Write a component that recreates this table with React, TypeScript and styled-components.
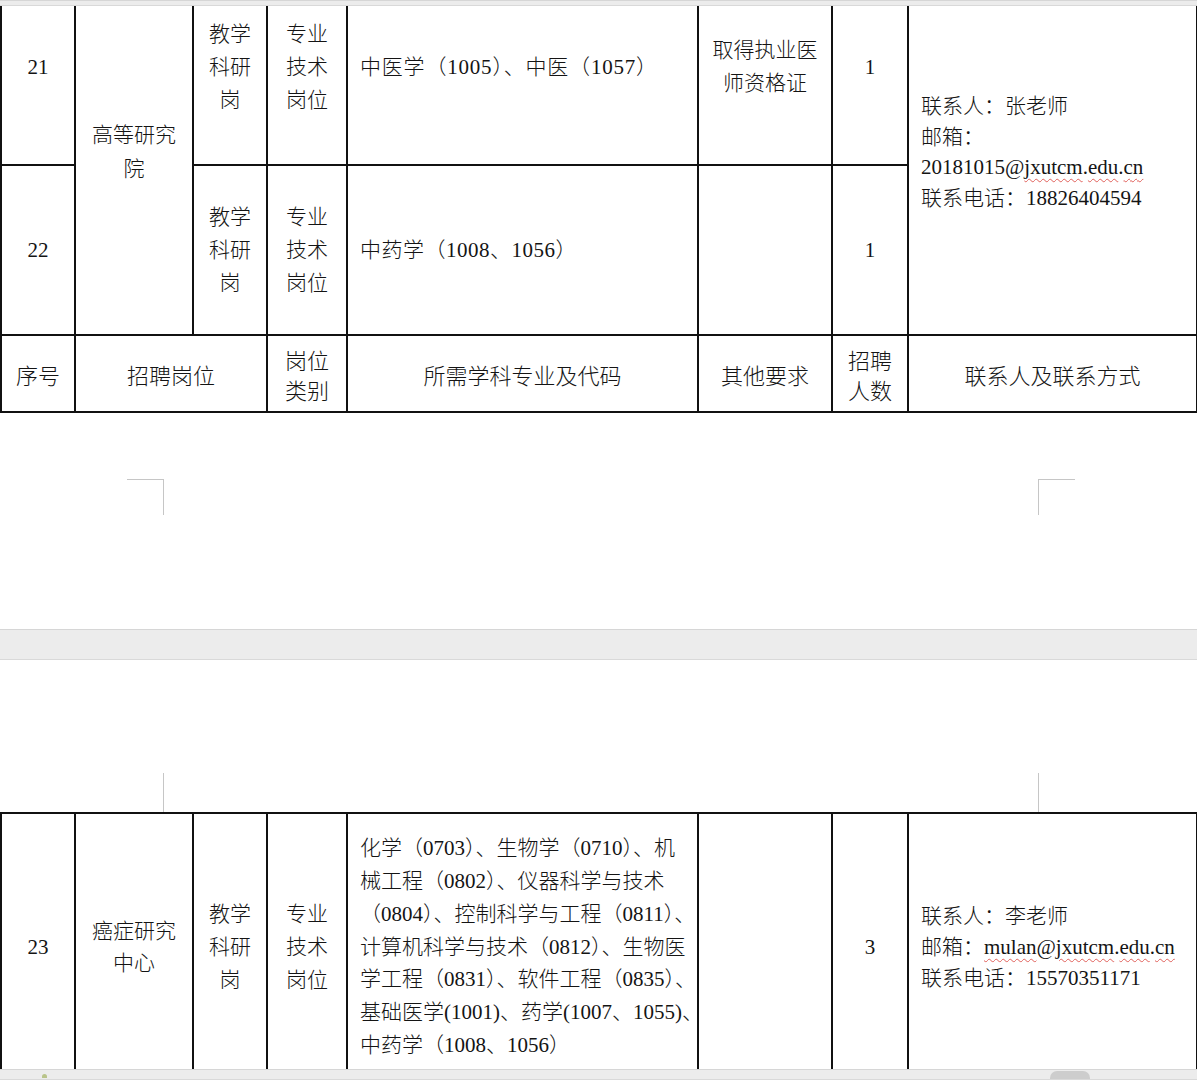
import React from 'react';
import styled, { createGlobalStyle } from 'styled-components';

const GlobalStyle = createGlobalStyle`
  html, body {
    margin: 0;
    padding: 0;
    background: #fff;
    overflow: hidden;
  }
  body {
    font-family: 'Liberation Serif', 'Noto Sans CJK SC', serif;
    color: #141414;
  }
`;

const Viewer = styled.div`
  width: 1197px;
  height: 1080px;
  display: flex;
  flex-direction: column;
  overflow: hidden;
`;

const Band = styled.div<{ h: number }>`
  flex-shrink: 0;
  height: ${({ h }) => h}px;
  box-sizing: border-box;
  background: #ececec;
  border-top: 1px solid #d6d6d6;
  border-bottom: 1px solid #d9d9d9;
  display: flex;
  align-items: flex-end;
`;

const Thumb = styled.div`
  margin-left: 1003px;
  width: 40px;
  height: 8px;
  border-radius: 7px 7px 0 0;
  background: #cdcdcd;
`;

const Dot = styled.div`
  margin-left: 42px;
  margin-bottom: 1px;
  width: 5px;
  height: 4px;
  border-radius: 3px 3px 0 0;
  background: #b9c48a;
`;

const Sheet = styled.div<{ h: number }>`
  flex-shrink: 0;
  height: ${({ h }) => h}px;
  overflow: hidden;
  background: #fff;
`;

const Scrolled = styled.div<{ offset: number }>`
  margin-top: ${({ offset }) => offset}px;
`;

const Table = styled.table`
  border-collapse: collapse;
  table-layout: fixed;
  width: 1196px;
`;

const Row = styled.tr<{ h: number }>`
  height: ${({ h }) => h}px;
`;

const Cell = styled.td<{
  align?: 'left' | 'center';
  lh?: number;
  size?: number;
  head?: boolean;
  spaced?: number;
}>`
  border: 2px solid #111;
  padding: ${({ head }) => (head ? '6px' : '0')}
    ${({ align }) => (align === 'left' ? '0 0 12px' : '6px 0')};
  text-align: ${({ align }) => align ?? 'center'};
  vertical-align: middle;
  font-size: ${({ size }) => size ?? 21}px;
  line-height: ${({ lh }) => lh ?? 33}px;
  letter-spacing: ${({ spaced }) => spaced ?? 0}px;
  font-weight: 300;
  white-space: nowrap;
`;

const Line = styled.div`
  display: block;
`;

const Wavy = styled.span`
  text-decoration: underline wavy #e0605a;
  text-decoration-thickness: 1px;
  text-underline-offset: 4px;
`;

const CropRow = styled.div<{ gapTop: number }>`
  display: flex;
  justify-content: space-between;
  padding: ${({ gapTop }) => gapTop}px 122px 0 127px;
`;

const CropMark = styled.div<{ side: 'left' | 'right'; withTop?: boolean; h: number }>`
  width: 37px;
  height: ${({ h }) => h}px;
  box-sizing: border-box;
  border-top: ${({ withTop }) => (withTop ? '1.5px solid #c6c6c6' : 'none')};
  ${({ side }) =>
    side === 'left'
      ? 'border-right: 1.5px solid #c6c6c6;'
      : 'border-left: 1.5px solid #c6c6c6;'}
`;

const widths = [74, 118, 74, 80, 351, 134, 76, 289];

const Cols = () => (
  <colgroup>
    {widths.map((w, i) => (
      <col key={i} style={{ width: w }} />
    ))}
  </colgroup>
);

const Lines: React.FC<{ items: React.ReactNode[] }> = ({ items }) => (
  <>
    {items.map((t, i) => (
      <Line key={i}>{t}</Line>
    ))}
  </>
);

const Email: React.FC<{ parts: string[] }> = ({ parts }) => (
  <>
    {parts.map((p, i) =>
      i % 2 === 0 ? <Wavy key={i}>{p}</Wavy> : <span key={i}>{p}</span>
    )}
  </>
);

const TeachPost = ['教学', '科研', '岗'];
const TechType = ['专业', '技术', '岗位'];

const App: React.FC = () => {
  return (
    <>
      <GlobalStyle />
      <Viewer>
        <Band h={6} />
        <Sheet h={623}>
          <Scrolled offset={-38}>
            <Table>
              <Cols />
              <tbody>
                <Row h={196}>
                  <Cell>21</Cell>
                  <Cell rowSpan={2} lh={34}>
                    <Lines items={['高等研究', '院']} />
                  </Cell>
                  <Cell>
                    <Lines items={TeachPost} />
                  </Cell>
                  <Cell>
                    <Lines items={TechType} />
                  </Cell>
                  <Cell align="left" spaced={0.8}>
                    中医学（1005）、中医（1057）
                  </Cell>
                  <Cell>
                    <Lines items={['取得执业医', '师资格证']} />
                  </Cell>
                  <Cell>1</Cell>
                  <Cell rowSpan={2} align="left" lh={30.5}>
                    <Lines
                      items={[
                        '联系人：张老师',
                        '邮箱：',
                        <>
                          20181015@
                          <Email parts={['jxutcm', '.', 'edu', '.', 'cn']} />
                        </>,
                        '联系电话：18826404594',
                      ]}
                    />
                  </Cell>
                </Row>
                <Row h={170}>
                  <Cell>22</Cell>
                  <Cell>
                    <Lines items={TeachPost} />
                  </Cell>
                  <Cell>
                    <Lines items={TechType} />
                  </Cell>
                  <Cell align="left" spaced={0.5}>
                    中药学（1008、1056）
                  </Cell>
                  <Cell />
                  <Cell>1</Cell>
                </Row>
                <Row h={77}>
                  <Cell head size={22}>
                    序号
                  </Cell>
                  <Cell head colSpan={2} size={22}>
                    招聘岗位
                  </Cell>
                  <Cell head size={22} lh={30}>
                    <Lines items={['岗位', '类别']} />
                  </Cell>
                  <Cell head size={22}>
                    所需学科专业及代码
                  </Cell>
                  <Cell head size={22}>
                    其他要求
                  </Cell>
                  <Cell head size={22} lh={30}>
                    <Lines items={['招聘', '人数']} />
                  </Cell>
                  <Cell head size={22}>
                    联系人及联系方式
                  </Cell>
                </Row>
              </tbody>
            </Table>
          </Scrolled>
          <CropRow gapTop={66}>
            <CropMark side="left" withTop h={36} />
            <CropMark side="right" withTop h={36} />
          </CropRow>
        </Sheet>
        <Band h={31} />
        <Sheet h={409}>
          <CropRow gapTop={113}>
            <CropMark side="left" h={39} />
            <CropMark side="right" h={39} />
          </CropRow>
          <Table>
            <Cols />
            <tbody>
              <Row h={268}>
                <Cell>23</Cell>
                <Cell lh={32}>
                  <Lines items={['癌症研究', '中心']} />
                </Cell>
                <Cell>
                  <Lines items={TeachPost} />
                </Cell>
                <Cell>
                  <Lines items={TechType} />
                </Cell>
                <Cell align="left" lh={32.8}>
                  <Lines
                    items={[
                      '化学（0703）、生物学（0710）、机',
                      '械工程（0802）、仪器科学与技术',
                      '（0804）、控制科学与工程（0811）、',
                      '计算机科学与技术（0812）、生物医',
                      '学工程（0831）、软件工程（0835）、',
                      '基础医学(1001)、药学(1007、1055)、',
                      '中药学（1008、1056）',
                    ]}
                  />
                </Cell>
                <Cell />
                <Cell>3</Cell>
                <Cell align="left" lh={31}>
                  <Lines
                    items={[
                      '联系人：李老师',
                      <>
                        邮箱：
                        <Email parts={['mulan', '@', 'jxutcm', '.', 'edu', '.', 'cn']} />
                      </>,
                      '联系电话：15570351171',
                    ]}
                  />
                </Cell>
              </Row>
            </tbody>
          </Table>
        </Sheet>
        <Band h={11}>
          <Dot />
          <Thumb />
        </Band>
      </Viewer>
    </>
  );
};

export default App;
